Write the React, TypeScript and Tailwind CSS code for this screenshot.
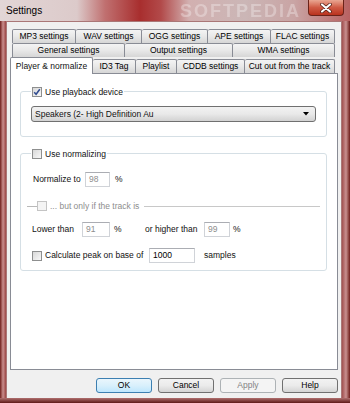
import React from 'react';

const font = "font-['Liberation_Sans',Arial,sans-serif]";

const Check: React.FC<{ checked?: boolean; disabled?: boolean }> = ({ checked, disabled }) => (
  <span
    className={`w-[10px] h-[10px] shrink-0 border flex items-center justify-center ${
      disabled ? 'border-[#c4c4c4] bg-[#f4f4f4]' : 'border-[#8e8f8f] bg-linear-to-br from-[#d8d8d8] to-[#f8f8f8]'
    }`}
  >
    {checked && (
      <svg width="8" height="8" viewBox="0 0 8 8">
        <path d="M1.2 4.2 L3.1 6.3 L6.8 1.2" fill="none" stroke="#2f4a8f" strokeWidth="1.5" />
      </svg>
    )}
  </span>
);

const Tab: React.FC<{ w: string; label: string; first?: boolean }> = ({ w, label, first }) => (
  <div
    className={`${w} h-[14px] shrink-0 flex items-center justify-center border-t border-r ${
      first ? 'border-l' : ''
    } border-[#898c95] rounded-t-[2px] bg-linear-to-b from-[#f4f4f4] via-[#e8e8e8] to-[#d6d6d6] text-black`}
  >
    {label}
  </div>
);

const Field: React.FC<{ w: string; value: string; disabled?: boolean }> = ({ w, value, disabled }) => (
  <div
    className={`${w} h-[15px] shrink-0 flex items-center pl-[3px] bg-white border border-[#d0d3d8] border-t-[#abadb3] ${
      disabled ? 'text-[#8d8d8d]' : 'text-black'
    }`}
  >
    {value}
  </div>
);

const Btn: React.FC<{ label: string; kind?: 'default' | 'disabled' }> = ({ label, kind }) => {
  const cls =
    kind === 'default'
      ? 'border-[#3c7fb1] bg-linear-to-b from-[#eaf6fd] via-[#d9f0fc] to-[#bee6fd] text-black'
      : kind === 'disabled'
      ? 'border-[#adb2b5] bg-[#f4f4f4] text-[#838383]'
      : 'border-[#707070] bg-linear-to-b from-[#f2f2f2] via-[#ebebeb] to-[#d4d4d4] text-black';
  return (
    <div className={`w-[56px] h-[15px] flex items-center justify-center border rounded-[3px] ${cls}`}>{label}</div>
  );
};

export default function App() {
  return (
    <div
      className={`w-[350px] h-[403px] flex flex-col overflow-hidden text-[8.5px] leading-none text-[#111] ${font} bg-[#8a3232]`}
    >
      {/* title bar */}
      <div className="relative h-[21px] shrink-0 flex items-center pl-[6px] bg-[linear-gradient(90deg,#e2d6d6_0%,#dccaca_22%,#c07070_30%,#a82e2e_40%,#b24a4a_46%,#d2b0b0_54%,#cbb6b6_70%,#c9a4a4_84%,#b86262_100%)]">
        <span className="text-[10px] text-black">Settings</span>
        <span className="absolute left-[180px] top-[2px] text-[18px] font-bold tracking-[2px] text-white/30 blur-[0.6px]">
          SOFTPEDIA
        </span>
        <div className="absolute left-[308px] top-0 w-[36px] h-[16px] rounded-b-[4px] border border-t-0 border-[#6b2218] bg-linear-to-b from-[#e9a692] via-[#cf5a44] to-[#b9311d] flex items-center justify-center">
          <svg width="12" height="10" viewBox="0 0 12 10">
            <path d="M2 1.5 L10 8.5 M10 1.5 L2 8.5" stroke="#4a1a12" strokeWidth="3.6" strokeLinecap="round" />
            <path d="M2 1.5 L10 8.5 M10 1.5 L2 8.5" stroke="#ffffff" strokeWidth="2.2" strokeLinecap="round" />
          </svg>
        </div>
      </div>

      <div className="flex flex-1 min-h-0">
        <div className="w-[6px] bg-linear-to-r from-[#6e1c1c] via-[#c98e8e] to-[#9a4444]" />

        {/* client area */}
        <div className="flex-1 bg-[#f0f0f0] border border-[#a77] border-b-0 pt-[7px] pl-[3px]">
          {/* tab rows */}
          <div className="ml-[2px] flex">
            <Tab w="w-[64px]" label="MP3 settings" first />
            <Tab w="w-[66px]" label="WAV settings" />
            <Tab w="w-[66px]" label="OGG settings" />
            <Tab w="w-[63px]" label="APE settings" />
            <Tab w="w-[64px]" label="FLAC settings" />
          </div>
          <div className="ml-[2px] flex">
            <Tab w="w-[113px]" label="General settings" first />
            <Tab w="w-[108px]" label="Output settings" />
            <Tab w="w-[102px]" label="WMA settings" />
          </div>
          <div className="flex items-end h-[16px]">
            <div className="w-[83px] h-[17px] -mb-px relative z-10 bg-white border border-b-0 border-[#898c95] rounded-t-[2px] flex items-center justify-center">
              Player &amp; normalize
            </div>
            <Tab w="w-[43px]" label="ID3 Tag" />
            <Tab w="w-[41px]" label="Playlist" />
            <Tab w="w-[68px]" label="CDDB settings" />
            <Tab w="w-[90px]" label="Cut out from the track" />
          </div>

          {/* panel */}
          <div className="w-[328px] h-[297px] bg-white border border-[#898c95] pl-[9px] pt-[17px]">
            <div className="relative w-[307px] h-[46px] border border-[#d5dfe5] rounded-[3px]">
              <div className="absolute left-[10px] -top-[5px] bg-white px-[1px] flex items-center gap-[3px] h-[10px]">
                <Check checked />
                <span>Use playback device</span>
              </div>
              <div className="mt-[14px] ml-[10px] w-[285px] h-[16px] border border-[#707070] rounded-[3px] bg-linear-to-b from-[#f2f2f2] via-[#e9e9e9] to-[#d2d2d2] flex items-center pl-[3px] pr-[6px]">
                <span className="flex-1">Speakers (2- High Definition Au</span>
                <svg width="6" height="4" viewBox="0 0 6 4">
                  <path d="M0 0 H6 L3 3.5 Z" fill="#000" />
                </svg>
              </div>
            </div>

            <div className="relative mt-[16px] w-[307px] h-[118px] border border-[#d5dfe5] rounded-[3px]">
              <div className="absolute left-[10px] -top-[5px] bg-white px-[1px] flex items-center gap-[3px] h-[10px]">
                <Check />
                <span>Use normalizing</span>
              </div>

              <div className="mt-[18px] pl-[12px] flex items-center h-[15px]">
                <span className="w-[52px]">Normalize to</span>
                <Field w="w-[25px]" value="98" disabled />
                <span className="ml-[5px]">%</span>
              </div>

              <div className="mt-[14px] pl-[6px] pr-[6px] flex items-center h-[10px]">
                <div className="w-[10px] h-px bg-[#b9b9b9]" />
                <Check disabled />
                <span className="ml-[3px] text-[#8d8d8d]">... but only if the track is</span>
                <div className="ml-[5px] flex-1 h-px bg-[#c8c8c8]" />
              </div>

              <div className="mt-[11px] pl-[11px] flex items-center h-[15px]">
                <span className="w-[50px]">Lower than</span>
                <Field w="w-[28px]" value="91" disabled />
                <span className="ml-[4px] w-[31px]">%</span>
                <span className="w-[59px]">or higher than</span>
                <Field w="w-[26px]" value="99" disabled />
                <span className="ml-[3px]">%</span>
              </div>

              <div className="mt-[11px] pl-[11px] flex items-center h-[15px]">
                <Check />
                <span className="ml-[3px] w-[104px]">Calculate peak on base of</span>
                <Field w="w-[46px]" value="1000" />
                <span className="ml-[9px]">samples</span>
              </div>
            </div>
          </div>

          {/* buttons */}
          <div className="mt-[8px] pr-[3px] flex justify-end gap-[6px]">
            <Btn label="OK" kind="default" />
            <Btn label="Cancel" />
            <Btn label="Apply" kind="disabled" />
            <Btn label="Help" />
          </div>
        </div>

        <div className="w-[8px] bg-linear-to-r from-[#a05050] via-[#c99090] to-[#6e1c1c]" />
      </div>
      <div className="h-[5px] shrink-0 bg-linear-to-b from-[#b07070] to-[#5e1818]" />
    </div>
  );
}
